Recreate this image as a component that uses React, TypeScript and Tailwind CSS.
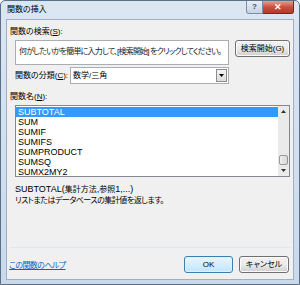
const items = ['SUBTOTAL', 'SUM', 'SUMIF', 'SUMIFS', 'SUMPRODUCT', 'SUMSQ', 'SUMX2MY2'];

const font = { fontFamily: '"Liberation Sans", "Noto Sans CJK JP", sans-serif' };

function WinButton({ label, focused, width }: { label: string; focused?: boolean; width: string }) {
  return (
    <button
      type="button"
      className={`${width} h-[17px] whitespace-nowrap rounded-[3px] border text-[8px] leading-none text-black ${
        focused
          ? 'border-[#3c7fb1] bg-gradient-to-b from-[#eaf6fd] to-[#bee6fd] shadow-[inset_0_0_0_1px_#dff2fc]'
          : 'border-[#707070] bg-gradient-to-b from-[#f2f2f2] via-[#ebebeb] to-[#cfcfcf] shadow-[inset_0_0_0_1px_#fcfcfc]'
      }`}
    >
      {label}
    </button>
  );
}

export default function App() {
  return (
    <div style={font} className="h-[285px] w-[300px] bg-white [font-feature-settings:'palt']">
      <div className="flex h-[285px] w-[300px] flex-col rounded-t-[5px] border border-[#5d6f86] bg-gradient-to-b from-[#dbe6f3] to-[#c9d9ec]">
        {/* title bar */}
        <div className="flex h-[18px] items-start justify-between">
          <span className="pl-[6px] pt-[3px] text-[8px] leading-[11px] text-black">関数の挿入</span>
          <div className="mr-[5px] flex">
            <div className="flex h-[13px] w-[17px] items-center justify-center rounded-bl-[3px] border border-t-0 border-[#7b8ea6] bg-gradient-to-b from-[#e8eef6] to-[#c6d3e3] text-[8px] font-bold leading-none text-[#3a4a5e]">
              ?
            </div>
            <div className="flex h-[13px] w-[31px] items-center justify-center rounded-br-[3px] border border-t-0 border-l-0 border-[#6d2a24] bg-gradient-to-b from-[#e0a193] via-[#c94f3c] to-[#b8382a] text-[9px] font-bold leading-none text-white">
              ✕
            </div>
          </div>
        </div>

        {/* client area */}
        <div className="mx-[5px] flex h-[261px] flex-col border border-[#9fb0c4] bg-[#f0f0f0] text-[8px] leading-[10px] text-black">
          <div className="ml-[3px] mt-[7px] whitespace-nowrap">
            関数の検索(<span className="underline">S</span>):
          </div>
          <div className="mt-[3px] flex items-start">
            <div className="ml-[8px] h-[25px] w-[214px] overflow-hidden whitespace-nowrap border border-[#abadb3] bg-white pl-[3px] pt-[6px] tracking-[-0.8px] text-[#222]">
              何がしたいかを簡単に入力して、[検索開始] をクリックしてください。
            </div>
            <div className="ml-[6px]">
              <WinButton label="検索開始(G)" width="w-[55px]" />
            </div>
          </div>
          <div className="mt-[2px] flex items-center">
            <div className="ml-[8px] w-[55px] whitespace-nowrap">
              関数の分類(<span className="underline">C</span>):
            </div>
            <div className="flex h-[17px] w-[159px] items-stretch border border-[#abadb3] bg-white">
              <span className="flex-1 pl-[2px] pt-[3px]">数学/三角</span>
              <div className="m-[1px] flex w-[11px] items-center justify-center border border-[#8c8c8c] bg-gradient-to-b from-[#f4f4f4] to-[#dcdcdc]">
                <svg width="5" height="3" viewBox="0 0 5 3">
                  <path d="M0 0h5L2.5 3z" fill="#000" />
                </svg>
              </div>
            </div>
          </div>
          <div className="ml-[3px] mt-[8px] whitespace-nowrap">
            関数名(<span className="underline">N</span>):
          </div>
          <div className="ml-[8px] mt-[3px] flex h-[72px] w-[275px] border border-[#828790] bg-white text-[9px]">
            <div className="flex-1 pt-[1px]">
              {items.map((it, i) => (
                <div
                  key={it}
                  className={`h-[10px] pl-[2px] leading-[10px] ${i === 0 ? 'bg-[#3399ff] text-white' : 'text-black'}`}
                >
                  {it}
                </div>
              ))}
            </div>
            <div className="flex w-[11px] flex-col bg-[#eaeaea]">
              <div className="flex h-[11px] items-center justify-center">
                <svg width="5" height="3" viewBox="0 0 5 3">
                  <path d="M0 3h5L2.5 0z" fill="#333" />
                </svg>
              </div>
              <div className="flex-1" />
              <div className="mx-[1px] h-[10px] rounded-[2px] border border-[#979797] bg-gradient-to-r from-[#f0f0f0] to-[#d8d8d8]" />
              <div className="flex h-[11px] items-center justify-center">
                <svg width="5" height="3" viewBox="0 0 5 3">
                  <path d="M0 0h5L2.5 3z" fill="#333" />
                </svg>
              </div>
            </div>
          </div>
          <div className="ml-[8px] mt-[7px] whitespace-nowrap text-[9px]">
            SUBTOTAL(<span className="text-[8px]">集計方法</span>,<span className="text-[8px]">参照</span>1,...)
          </div>
          <div className="ml-[8px] mt-[1px] whitespace-nowrap tracking-[-0.5px]">リストまたはデータベースの集計値を返します。</div>
          <div className="mx-[3px] mt-[41px] border-t border-[#dfe6ee]" />
          <div className="mt-[8px] flex items-center">
            <a className="ml-[2px] mt-[2px] flex-1 whitespace-nowrap tracking-[-0.6px] text-[#0066cc] underline">この関数のヘルプ</a>
            <WinButton label="OK" focused width="w-[49px]" />
            <div className="ml-[6px] mr-[4px]">
              <WinButton label="キャンセル" width="w-[50px]" />
            </div>
          </div>
        </div>
      </div>
    </div>
  );
}
